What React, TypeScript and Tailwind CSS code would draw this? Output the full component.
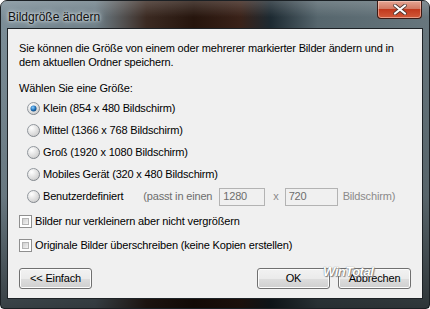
const font = { fontFamily: '"Liberation Sans", Arial, sans-serif' };

function Radio({ checked }: { checked?: boolean }) {
  return (
    <svg width="13" height="13" viewBox="0 0 13 13" className="shrink-0">
      <defs>
        <linearGradient id="rb" x1="0" y1="0" x2="1" y2="1">
          <stop offset="0" stopColor="#9aa0a6" />
          <stop offset="1" stopColor="#7a7f85" />
        </linearGradient>
        <radialGradient id="rf" cx="0.35" cy="0.3" r="0.8">
          <stop offset="0" stopColor="#ffffff" />
          <stop offset="1" stopColor="#c9c9c9" />
        </radialGradient>
        <radialGradient id="rd" cx="0.4" cy="0.35" r="0.7">
          <stop offset="0" stopColor="#8fd0ff" />
          <stop offset="0.6" stopColor="#1d6fb8" />
          <stop offset="1" stopColor="#0c3f70" />
        </radialGradient>
      </defs>
      <circle cx="6.5" cy="6.5" r="6" fill="url(#rf)" stroke="url(#rb)" strokeWidth="1" />
      {checked && <circle cx="6.5" cy="6.5" r="3" fill="url(#rd)" />}
    </svg>
  );
}

function Check() {
  return (
    <span className="w-[13px] h-[13px] shrink-0 border border-[#8f8f8f] bg-white p-[2px]">
      <span className="block w-full h-full bg-gradient-to-br from-[#cfcfcf] to-[#f4f4f4] border border-[#b5b5b5]" />
    </span>
  );
}

function Btn({ label, w }: { label: string; w: string }) {
  return (
    <div
      className={`${w} h-[21px] rounded-[3px] border border-[#707070] flex items-center justify-center text-[11px] text-black bg-[linear-gradient(#f2f2f2_0%,#ebebeb_50%,#dddddd_51%,#cfcfcf_100%)] shadow-[inset_0_0_0_1px_#fcfcfc]`}
    >
      {label}
    </div>
  );
}

function RadioRow({ label, checked }: { label: string; checked?: boolean }) {
  return (
    <div className="flex items-center gap-[3px] h-[22px] pl-[8px]">
      <Radio checked={checked} />
      <span>{label}</span>
    </div>
  );
}

export default function App() {
  return (
    <div
      className="w-[430px] h-[309px] bg-white relative overflow-hidden text-[11px] tracking-[-0.17px] text-black"
      style={font}
    >
      <div className="w-[430px] h-[309px] rounded-t-[7px] rounded-b-[4px] border border-[#1b2024] flex flex-col bg-[linear-gradient(90deg,#7b8d97_0%,#6e7f88_22%,#3b2a22_34%,#26150d_45%,#3a2219_56%,#1d2a32_63%,#56666d_74%,#67767d_100%)]">
        {/* Title bar */}
        <div className="h-[27px] flex items-start justify-between pl-[7px] pr-[7px] bg-[linear-gradient(180deg,rgba(255,255,255,0.18),rgba(255,255,255,0)_60%)]">
          <span className="text-[12px] tracking-normal text-[#111] pt-[7px] [text-shadow:0_0_6px_#e8eef2,0_0_3px_#e8eef2]">
            Bildgröße ändern
          </span>
          <div className="w-[45px] h-[18px] rounded-b-[4px] border border-t-0 border-[#3c1a14] flex items-center justify-center bg-[linear-gradient(#e6a593_0%,#d27a64_45%,#c2391d_50%,#d25a3a_100%)] shadow-[inset_0_0_0_1px_rgba(255,220,210,0.5)]">
            <svg width="14" height="11" viewBox="0 0 14 11">
              <path
                d="M2 1.5 L12 9.5 M12 1.5 L2 9.5"
                stroke="#4a3530"
                strokeWidth="3.6"
                strokeLinecap="round"
              />
              <path
                d="M2 1.5 L12 9.5 M12 1.5 L2 9.5"
                stroke="#ffffff"
                strokeWidth="2.2"
                strokeLinecap="round"
              />
            </svg>
          </div>
        </div>

        {/* Frame */}
        <div className="flex-1 px-[6px] pb-[9px] bg-[linear-gradient(180deg,rgba(0,0,0,0)_0%,rgba(0,0,0,0.15)_60%,rgba(0,0,0,0.55)_100%)]">
          <div className="h-full border border-[#1d2226] bg-[#f0f0f0] px-[11px] pt-[12px] flex flex-col">
            <p className="leading-[14px] w-[390px]">
              Sie können die Größe von einem oder mehrerer markierter Bilder ändern und in dem aktuellen
              Ordner speichern.
            </p>
            <p className="leading-[14px] mt-[12px] mb-[2px]">Wählen Sie eine Größe:</p>

            <RadioRow label="Klein (854 x 480 Bildschirm)" checked />
            <RadioRow label="Mittel (1366 x 768 Bildschirm)" />
            <RadioRow label="Groß (1920 x 1080 Bildschirm)" />
            <RadioRow label="Mobiles Gerät (320 x 480 Bildschirm)" />
            <div className="flex items-center h-[23px] pl-[8px]">
              <Radio />
              <span className="ml-[3px]">Benutzerdefiniert</span>
              <span className="ml-[20px] text-[#6d6d6d]">(passt in einen</span>
              <div className="ml-[7px] w-[46px] h-[18px] border border-[#b3b3b3] bg-[#f0f0f0] px-[3px] flex items-center text-[#6d6d6d]">
                1280
              </div>
              <span className="ml-[8px] mr-[6px] text-[#8a8a8a]">x</span>
              <div className="w-[53px] h-[18px] border border-[#b3b3b3] bg-[#f0f0f0] px-[3px] flex items-center text-[#6d6d6d]">
                720
              </div>
              <span className="ml-[5px] text-[#8a8a8a]">Bildschirm)</span>
            </div>

            <div className="flex items-center gap-[3px] h-[23px] mt-[2px]">
              <Check />
              <span>Bilder nur verkleinern aber nicht vergrößern</span>
            </div>
            <div className="flex items-center gap-[3px] h-[23px] mt-[1px]">
              <Check />
              <span>Originale Bilder überschreiben (keine Kopien erstellen)</span>
            </div>

            <div className="flex items-center mt-[11px]">
              <Btn label="<< Einfach" w="w-[73px]" />
              <div className="flex-1" />
              <div className="relative flex gap-[8px]">
                <Btn label="OK" w="w-[73px]" />
                <Btn label="Abbrechen" w="w-[73px]" />
                <span className="absolute left-[66px] top-[-6px] text-[13px] italic font-bold text-white tracking-[-0.5px] [text-shadow:0_0_1px_#555,1px_1px_1px_#888]">
                  WinTotal
                </span>
              </div>
            </div>
          </div>
        </div>
      </div>
    </div>
  );
}
